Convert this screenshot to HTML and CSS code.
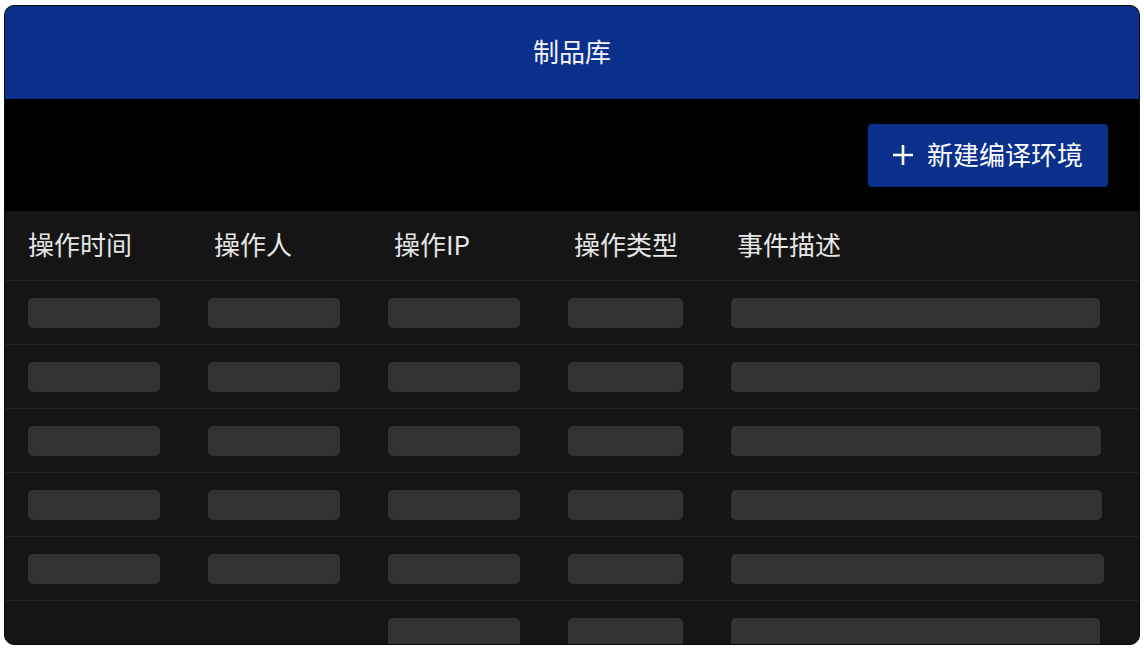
FILE: index.html
```html
<!DOCTYPE html>
<html lang="zh">
<head>
<meta charset="utf-8">
<link rel="stylesheet" href="styles.css">
</head>
<body>
<div class="frame">
  <header class="topbar">制品库</header>
  <div class="toolbar">
    <button class="btn-primary">
      <svg class="plus" viewBox="0 0 20 20" width="20" height="20"><path d="M10 0v20M0 10h20" stroke="#fff" stroke-width="2.6" fill="none"/></svg>
      <span>新建编译环境</span>
    </button>
  </div>
  <div class="table">
    <div class="row head">
      <div class="cell">操作时间</div>
      <div class="cell c2">操作人</div>
      <div class="cell c2">操作IP</div>
      <div class="cell c2">操作类型</div>
      <div class="cell c2">事件描述</div>
    </div>
    <div class="row">
      <div class="cell"><i class="sk w132"></i></div>
      <div class="cell"><i class="sk w132"></i></div>
      <div class="cell"><i class="sk w132"></i></div>
      <div class="cell"><i class="sk w115"></i></div>
      <div class="cell"><i class="sk" style="width:369px"></i></div>
    </div>
    <div class="row">
      <div class="cell"><i class="sk w132"></i></div>
      <div class="cell"><i class="sk w132"></i></div>
      <div class="cell"><i class="sk w132"></i></div>
      <div class="cell"><i class="sk w115"></i></div>
      <div class="cell"><i class="sk" style="width:369px"></i></div>
    </div>
    <div class="row">
      <div class="cell"><i class="sk w132"></i></div>
      <div class="cell"><i class="sk w132"></i></div>
      <div class="cell"><i class="sk w132"></i></div>
      <div class="cell"><i class="sk w115"></i></div>
      <div class="cell"><i class="sk" style="width:370px"></i></div>
    </div>
    <div class="row">
      <div class="cell"><i class="sk w132"></i></div>
      <div class="cell"><i class="sk w132"></i></div>
      <div class="cell"><i class="sk w132"></i></div>
      <div class="cell"><i class="sk w115"></i></div>
      <div class="cell"><i class="sk" style="width:371px"></i></div>
    </div>
    <div class="row">
      <div class="cell"><i class="sk w132"></i></div>
      <div class="cell"><i class="sk w132"></i></div>
      <div class="cell"><i class="sk w132"></i></div>
      <div class="cell"><i class="sk w115"></i></div>
      <div class="cell"><i class="sk" style="width:373px"></i></div>
    </div>
    <div class="row last">
      <div class="cell"></div>
      <div class="cell"></div>
      <div class="cell"><i class="sk w132"></i></div>
      <div class="cell"><i class="sk w115"></i></div>
      <div class="cell"><i class="sk" style="width:369px"></i></div>
    </div>
  </div>
</div>
</body>
</html>
```
FILE: styles.css
```css
* { box-sizing: border-box; }
html, body { margin: 0; padding: 0; background: #fff; }
body {
  font-family: "Noto Sans CJK SC", "Noto Sans", sans-serif;
  color: #fff;
}
.frame {
  margin: 5px 4px 0;
  height: 640px;
  border: 1px solid #0a0a0a;
  border-radius: 10px;
  overflow: hidden;
  background: #151515;
  display: flex;
  flex-direction: column;
}
.topbar {
  height: 93px;
  flex: none;
  background: #0a308c;
  display: flex;
  align-items: center;
  justify-content: center;
  font-size: 26px;
  color: #f2f4fa;
  padding-bottom: 4px;
}
.toolbar {
  height: 112px;
  flex: none;
  background: #000;
  display: flex;
  justify-content: flex-end;
  align-items: flex-start;
  padding: 25px 31px 0 0;
}
.btn-primary {
  width: 240px;
  height: 63px;
  border: 0;
  border-radius: 4px;
  background: #0a308c;
  color: #fff;
  font-family: inherit;
  font-size: 26px;
  display: flex;
  align-items: center;
  justify-content: center;
  gap: 14px;
  padding: 0 0 5px;
}
.plus { flex: none; margin-top: 4px; }
.table { flex: 1; background: #151515; overflow: hidden; }
.row {
  display: grid;
  grid-template-columns: 180px 180px 180px 163px 1fr;
  padding-left: 23px;
  height: 64px;
  border-bottom: 1px solid #242424;
  align-items: center;
}
.row.head {
  height: 70px;
  font-size: 26px;
  color: #e6e6e6;
  align-items: center;
  padding-bottom: 4px;
}
.row.head .c2 { padding-left: 6px; }
.row.last { border-bottom: 0; align-items: start; padding-top: 17px; }
.cell { display: flex; align-items: center; white-space: nowrap; }
.sk {
  display: block;
  height: 30px;
  border-radius: 5px;
  background: #333333;
}
.w132 { width: 132px; }
.w115 { width: 115px; }
```
